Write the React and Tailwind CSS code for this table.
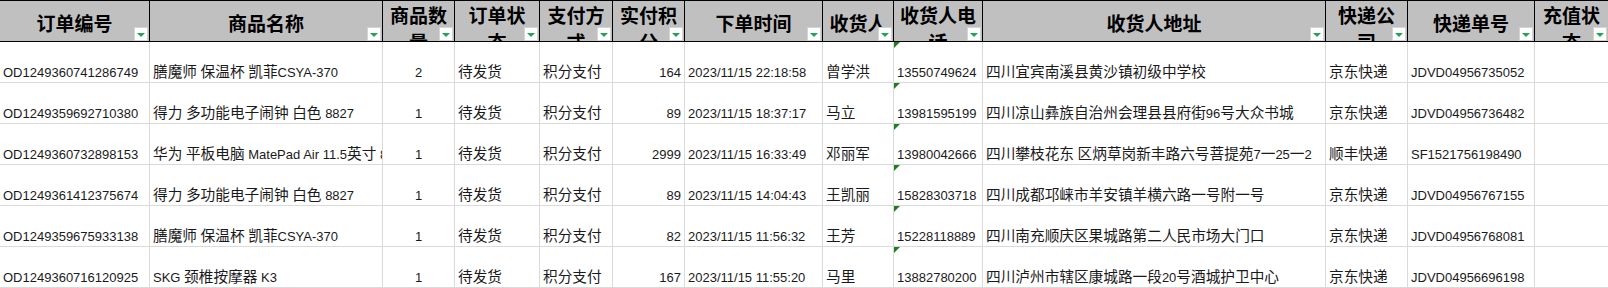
import React from "react";

const COLS = [150, 233, 72, 85, 73, 72, 138, 71, 89, 343, 82, 127, 73];

const HEADERS = [
  ["订单编号"],
  ["商品名称"],
  ["商品数", "量"],
  ["订单状", "态"],
  ["支付方", "式"],
  ["实付积", "分"],
  ["下单时间"],
  ["收货人"],
  ["收货人电", "话"],
  ["收货人地址"],
  ["快递公", "司"],
  ["快递单号"],
  ["充值状", "态"],
];

// alignment per column: l = left, c = center, r = right
const ALIGN = ["l", "l", "c", "l", "l", "r", "l", "l", "l", "l", "l", "l", "l"];

const ROWS = [
  ["OD1249360741286749", "膳魔师 保温杯 凯菲CSYA-370", "2", "待发货", "积分支付", "164", "2023/11/15 22:18:58", "曾学洪", "13550749624", "四川宜宾南溪县黄沙镇初级中学校", "京东快递", "JDVD04956735052", ""],
  ["OD1249359692710380", "得力 多功能电子闹钟 白色 8827", "1", "待发货", "积分支付", "89", "2023/11/15 18:37:17", "马立", "13981595199", "四川凉山彝族自治州会理县县府街96号大众书城", "京东快递", "JDVD04956736482", ""],
  ["OD1249360732898153", "华为 平板电脑 MatePad Air 11.5英寸 8GB+128GB", "1", "待发货", "积分支付", "2999", "2023/11/15 16:33:49", "邓丽军", "13980042666", "四川攀枝花东 区炳草岗新丰路六号菩提苑7一25一2", "顺丰快递", "SF1521756198490", ""],
  ["OD1249361412375674", "得力 多功能电子闹钟 白色 8827", "1", "待发货", "积分支付", "89", "2023/11/15 14:04:43", "王凯丽", "15828303718", "四川成都邛崃市羊安镇羊横六路一号附一号", "京东快递", "JDVD04956767155", ""],
  ["OD1249359675933138", "膳魔师 保温杯 凯菲CSYA-370", "1", "待发货", "积分支付", "82", "2023/11/15 11:56:32", "王芳", "15228118889", "四川南充顺庆区果城路第二人民市场大门口", "京东快递", "JDVD04956768081", ""],
  ["OD1249360716120925", "SKG 颈椎按摩器 K3", "1", "待发货", "积分支付", "167", "2023/11/15 11:55:20", "马里", "13882780200", "四川泸州市辖区康城路一段20号酒城护卫中心", "京东快递", "JDVD04956696198", ""],
];

const CJK_SPLIT = /([\u2E80-\u9FFF\u3000-\u303F\uFF00-\uFFEF]+)/;
const CJK_TEST = /[\u2E80-\u9FFF\u3000-\u303F\uFF00-\uFFEF]/;

function Mixed({ text }) {
  const parts = text.split(CJK_SPLIT);
  return parts.map((p, i) => {
    if (p === "") return null;
    if (CJK_TEST.test(p)) {
      return (
        <span key={i} className="font-['Noto_Sans_CJK_SC',sans-serif] text-[14.67px]">
          {p}
        </span>
      );
    }
    return (
      <span key={i} className="font-['Liberation_Sans',sans-serif] text-[13px]">
        {p}
      </span>
    );
  });
}

function FilterButton() {
  return (
    <div className="absolute right-[1px] bottom-0 w-[14px] h-[14px] bg-white border border-[#d4d4d4] flex items-center justify-center">
      <div className="w-0 h-0 border-x-[4px] border-x-transparent border-t-[4px] border-t-[#22a35b] mt-[1px]" />
    </div>
  );
}

function HeaderCell({ lines, last }) {
  const two = lines.length > 1;
  return (
    <div
      className={
        "relative h-[40px] overflow-hidden bg-[#c0c0c0] " +
        (last ? "" : "border-r border-black ")
      }
    >
      {two ? (
        <div className="flex flex-col items-center text-center leading-[27px]">
          {lines.map((l, i) => (
            <div key={i} className="whitespace-nowrap">
              {l}
            </div>
          ))}
        </div>
      ) : (
        <div className="h-full flex items-center justify-center pt-[3px] leading-[27px] whitespace-nowrap">
          {lines[0]}
        </div>
      )}
      <FilterButton />
    </div>
  );
}

function DataCell({ text, align, col, last }) {
  const j = align === "c" ? "justify-center" : align === "r" ? "justify-end" : "justify-start";
  return (
    <div
      className={
        "relative h-[40px] flex items-end overflow-hidden whitespace-nowrap px-[3px] leading-[18px] " +
        j +
        (last ? "" : " border-r border-[#dadada]")
      }
    >
      {col === 8 && (
        <div className="absolute top-0 left-0 w-0 h-0 border-t-[6px] border-t-[#1f7f1f] border-r-[6px] border-r-transparent" />
      )}
      <span className="block">
        <Mixed text={text} />
      </span>
    </div>
  );
}

const gridCols =
  "grid grid-cols-[150px_233px_72px_85px_73px_72px_138px_71px_89px_343px_82px_127px_73px]";

export default function App() {
  return (
    <div className="w-[1608px] h-[288px] overflow-hidden bg-white text-[#1a1a1a] font-['Liberation_Sans','Noto_Sans_CJK_SC',sans-serif] text-[13px]">
      <div
        className={
          gridCols +
          " border-t border-b border-black font-['Noto_Sans_CJK_SC',sans-serif] font-bold text-[19px] text-black"
        }
      >
        {HEADERS.map((h, i) => (
          <HeaderCell key={i} lines={h} last={i === COLS.length - 1} />
        ))}
      </div>
      {ROWS.map((r, ri) => (
        <div key={ri} className={gridCols + " border-b border-[#dadada]"}>
          {r.map((c, ci) => (
            <DataCell key={ci} text={c} align={ALIGN[ci]} col={ci} last={ci === COLS.length - 1} />
          ))}
        </div>
      ))}
    </div>
  );
}
